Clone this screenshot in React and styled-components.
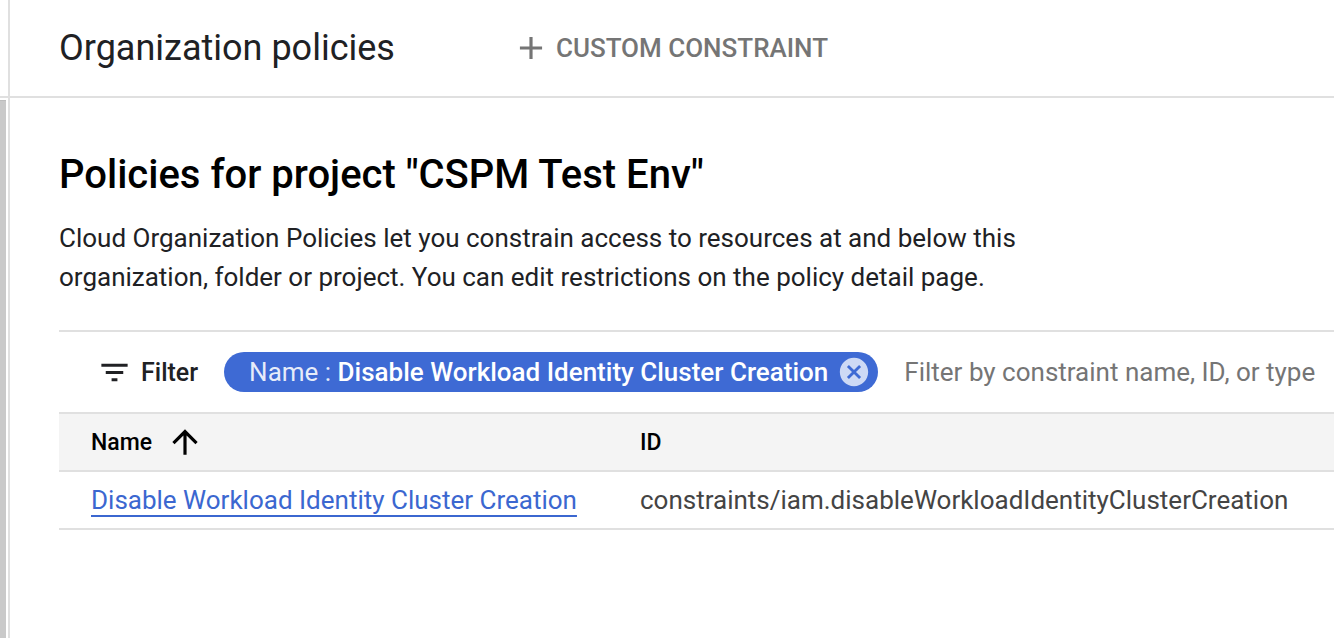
import React from 'react';
import styled, { createGlobalStyle } from 'styled-components';

const GlobalStyle = createGlobalStyle`
  html, body {
    margin: 0;
    padding: 0;
    background: #fff;
    font-family: Roboto, "Liberation Sans", Arial, sans-serif;
    color: #202124;
  }
  * { box-sizing: border-box; }
`;

const Shell = styled.div`
  display: flex;
  height: 100vh;
  overflow: hidden;
`;

const Rail = styled.div`
  width: 8px;
  flex: none;
  display: flex;
  flex-direction: column;
`;

const RailTop = styled.div`
  height: 98px;
  border-bottom: 2px solid #e0e0e0;
`;

const RailBar = styled.div`
  flex: 1;
  width: 6px;
  margin-top: 2px;
  background: #c9c9c9;
  border-top: 1px solid #bdbdbd;
`;

const Main = styled.div`
  flex: 1;
  min-width: 0;
  border-left: 2px solid #e0e0e0;
  display: flex;
  flex-direction: column;
`;

const Header = styled.header`
  height: 98px;
  border-bottom: 2px solid #e0e0e0;
  display: flex;
  align-items: center;
  padding-left: 49px;
`;

const Title = styled.h1`
  margin: 0;
  font-size: 36px;
  font-weight: 400;
  color: #202124;
`;

const ActionButton = styled.button`
  display: flex;
  align-items: center;
  gap: 6px;
  margin-left: 117px;
  padding: 0;
  border: none;
  background: none;
  font-family: inherit;
  font-size: 26px;
  font-weight: 500;
  color: #757575;
  cursor: pointer;
`;

const Content = styled.section`
  padding: 53px 0 0 49px;
`;

const Heading = styled.h2`
  margin: 0;
  font-size: 40px;
  line-height: 48px;
  font-weight: 500;
  color: #000;
`;

const Description = styled.p`
  margin: 20px 0 0;
  max-width: 1000px;
  font-size: 26px;
  line-height: 39px;
  color: #202124;
`;

const FilterBar = styled.div`
  margin-top: 33px;
  height: 82px;
  border-top: 2px solid #e0e0e0;
  display: flex;
  align-items: center;
  padding-left: 38px;
  white-space: nowrap;
`;

const FilterLabel = styled.div`
  display: flex;
  align-items: center;
  gap: 9px;
  font-size: 25px;
  font-weight: 500;
  color: #202124;
`;

const Chip = styled.div`
  display: flex;
  align-items: center;
  height: 40px;
  margin-left: 26px;
  padding: 0 7px 0 25px;
  border-radius: 20px;
  background: #3e6ad4;
  color: #fff;
  font-size: 26px;
  gap: 9px;
`;

const ChipKey = styled.span`
  font-weight: 400;
  color: rgba(255, 255, 255, 0.88);
`;

const ChipValue = styled.span`
  font-weight: 500;
`;

const Placeholder = styled.span`
  margin-left: 26px;
  font-size: 26px;
  color: #757575;
`;

const Table = styled.div`
  border-top: 2px solid #e0e0e0;
`;

const Row = styled.div`
  display: grid;
  grid-template-columns: 581px 1fr;
  height: 58px;
  align-items: center;
  border-bottom: 2px solid #e0e0e0;
  background: ${(p) => (p.$head ? '#f4f4f4' : '#fff')};
  white-space: nowrap;
`;

const HeadCell = styled.div`
  display: flex;
  align-items: center;
  gap: 14px;
  padding-left: ${(p) => (p.$first ? '32px' : '0')};
  font-size: 23px;
  font-weight: 500;
  color: #000;
`;

const Cell = styled.div`
  padding-left: ${(p) => (p.$first ? '32px' : '0')};
  font-size: 26px;
  color: #444;
`;

const Link = styled.a`
  color: #3b67d0;
  text-decoration: underline;
  text-decoration-thickness: 2px;
  text-underline-offset: 6px;
  cursor: pointer;
`;

const PlusIcon = () => (
  <svg width="38" height="38" viewBox="0 0 24 24" fill="#757575">
    <path d="M19 13h-6v6h-2v-6H5v-2h6V5h2v6h6v2z" />
  </svg>
);

const FilterIcon = () => (
  <svg width="35" height="35" viewBox="0 0 24 24" fill="#202124">
    <path d="M10 18h4v-2h-4v2zM3 6v2h18V6H3zm3 7h12v-2H6v2z" />
  </svg>
);

const CancelIcon = () => (
  <svg width="34" height="34" viewBox="0 0 24 24" fill="#cdd9f5">
    <path d="M12 2C6.47 2 2 6.470 2 12s4.47 10 10 10 10-4.47 10-10S17.53 2 12 2zm5 13.59L15.59 17 12 13.41 8.41 17 7 15.59 10.59 12 7 8.41 8.41 7 12 10.59 15.59 7 17 8.41 13.41 12 17 15.59z" />
  </svg>
);

const ArrowUpIcon = () => (
  <svg width="38" height="38" viewBox="0 0 24 24" fill="#000">
    <path d="M4 12l1.41 1.41L11 7.83V20h2V7.83l5.58 5.59L20 12l-8-8-8 8z" />
  </svg>
);

const App = () => {
  return (
    <>
      <GlobalStyle />
      <Shell>
        <Rail>
          <RailTop />
          <RailBar />
        </Rail>
        <Main>
          <Header>
            <Title>Organization policies</Title>
            <ActionButton>
              <PlusIcon />
              CUSTOM CONSTRAINT
            </ActionButton>
          </Header>

          <Content>
            <Heading>Policies for project "CSPM Test Env"</Heading>
            <Description>
              Cloud Organization Policies let you constrain access to resources at and below this
              organization, folder or project. You can edit restrictions on the policy detail page.
            </Description>

            <FilterBar>
              <FilterLabel>
                <FilterIcon />
                Filter
              </FilterLabel>
              <Chip>
                <span>
                  <ChipKey>Name : </ChipKey>
                  <ChipValue>Disable Workload Identity Cluster Creation</ChipValue>
                </span>
                <CancelIcon />
              </Chip>
              <Placeholder>Filter by constraint name, ID, or type</Placeholder>
            </FilterBar>

            <Table>
              <Row $head>
                <HeadCell $first>
                  Name
                  <ArrowUpIcon />
                </HeadCell>
                <HeadCell>ID</HeadCell>
              </Row>
              <Row>
                <Cell $first>
                  <Link>Disable Workload Identity Cluster Creation</Link>
                </Cell>
                <Cell>constraints/iam.disableWorkloadIdentityClusterCreation</Cell>
              </Row>
            </Table>
          </Content>
        </Main>
      </Shell>
    </>
  );
};

export default App;
